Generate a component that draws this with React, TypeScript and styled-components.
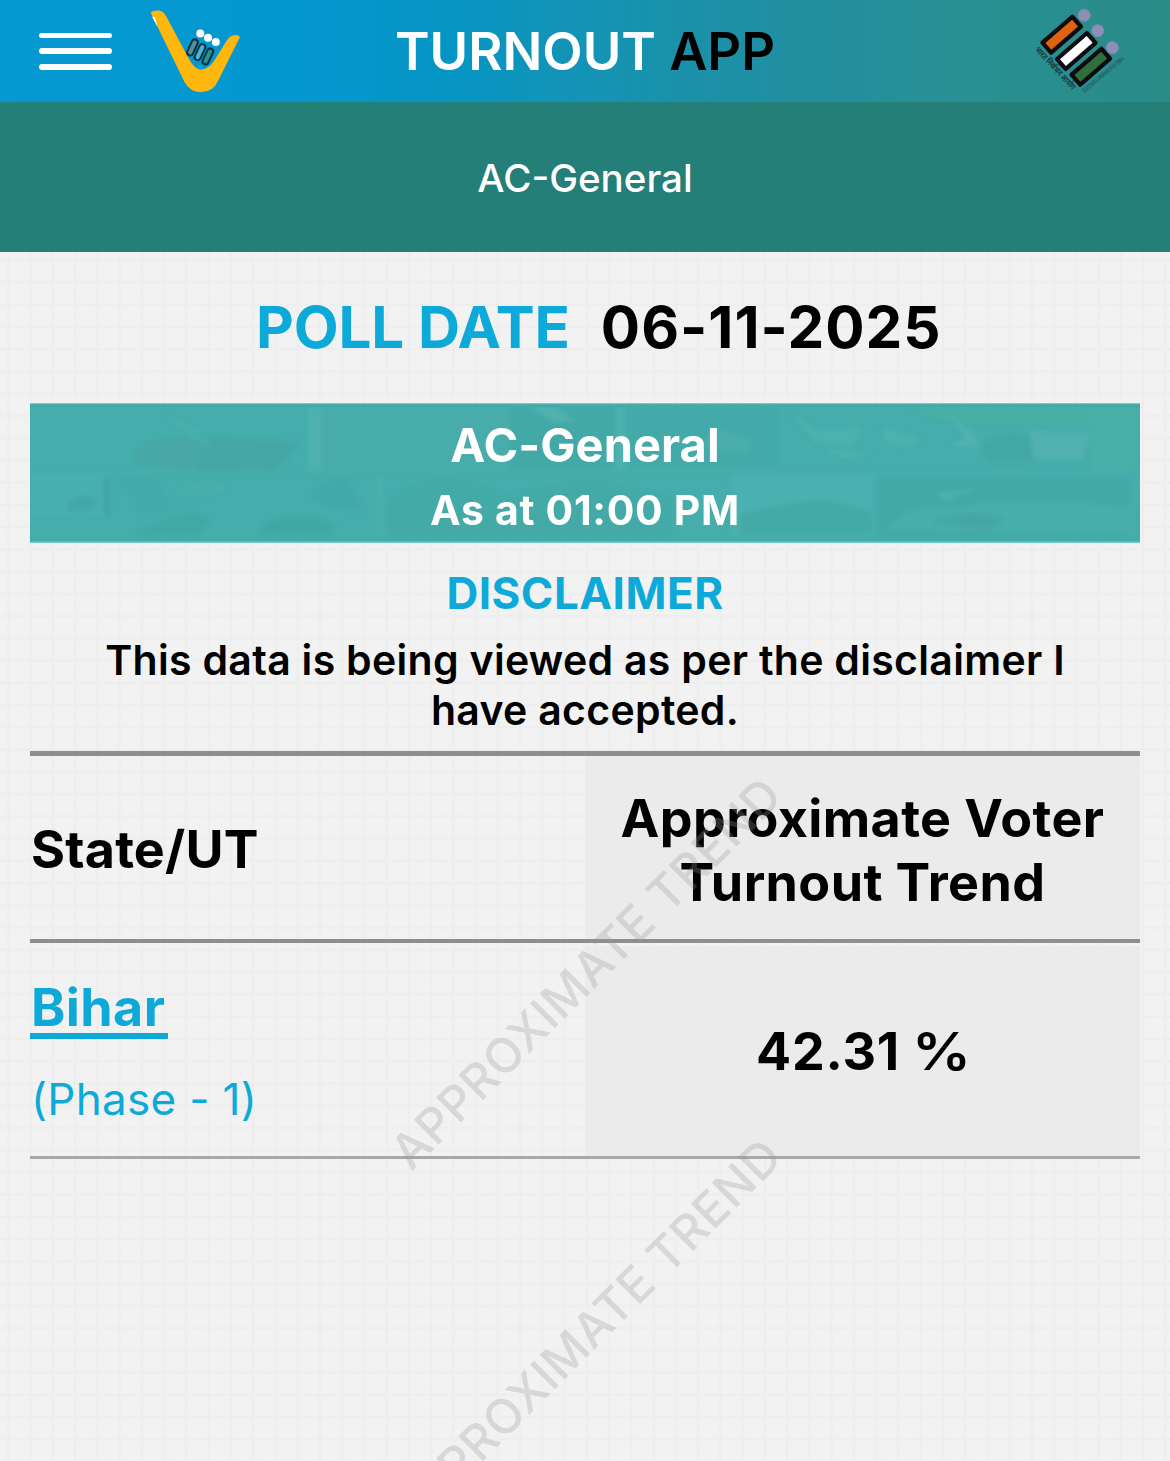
import React from "react";
import styled, { createGlobalStyle } from "styled-components";

const Global = createGlobalStyle`
  * { box-sizing: border-box; }
  html, body { margin: 0; padding: 0; }
  body {
    font-family: Inter, "Liberation Sans", sans-serif;
    color: #000;
    background: #f2f2f2;
  }
`;

const Screen = styled.div`
  position: relative;
  width: 1170px;
  height: 1461px;
  overflow: hidden;
  display: flex;
  flex-direction: column;
  background-color: #f2f2f2;
  background-image: linear-gradient(90deg, transparent 0, #eeeeee 1.5px, #eeeeee 2.5px, transparent 4px),
    linear-gradient(180deg, transparent 0, #eeeeee 1.5px, #eeeeee 2.5px, transparent 4px);
  background-size: 22.25px 22.25px;
  background-position: 6.5px 13.5px;
`;

const TopBar = styled.header`
  flex: none;
  height: 102px;
  display: grid;
  grid-template-columns: 1fr auto 1fr;
  align-items: center;
  background: linear-gradient(
    90deg,
    #0598d1 0%,
    #0598d0 25%,
    #0595c4 38%,
    #1194b9 47%,
    #1892ad 56%,
    #228fa0 68%,
    #289094 82%,
    #2a8b87 100%
  );
`;

const BarSide = styled.div<{ $end?: boolean }>`
  display: flex;
  height: 102px;
  align-items: center;
  justify-content: ${(p) => (p.$end ? "flex-end" : "flex-start")};
  padding: ${(p) => (p.$end ? "0 40px 0 0" : "0 0 0 39px")};
`;

const MenuButton = styled.button`
  width: 73px;
  height: 37px;
  margin: 0 36px 0 0;
  padding: 0;
  border: 0;
  background: none;
  display: flex;
  flex-direction: column;
  justify-content: space-between;
`;

const MenuStroke = styled.span`
  display: block;
  height: 5.6px;
  border-radius: 3px;
  background: #fff;
`;

const AppTitle = styled.h1`
  margin: 0;
  font-size: 52.5px;
  line-height: 102px;
  font-weight: 600;
  color: #fff;
  white-space: pre;
`;

const TitleDark = styled.span`
  color: #000;
`;

const SubBar = styled.div`
  flex: none;
  height: 150px;
  background: #247f78;
  color: #fff;
  font-size: 38.5px;
  font-weight: 500;
  line-height: 153px;
  text-align: center;
`;

const PollDate = styled.div`
  flex: none;
  display: flex;
  height: 151px;
  padding-left: 256px;
  gap: 31px;
  font-size: 58.3px;
  font-weight: 700;
  line-height: 150px;
  white-space: nowrap;
`;

const PollLabel = styled.span`
  color: #0daad9;
  letter-spacing: -0.1px;
`;

const PollValue = styled.span`
  letter-spacing: 1px;
`;

const Banner = styled.section`
  position: relative;
  flex: none;
  height: 140px;
  margin: 0 30px;
  padding-top: 9px;
  background: #45adab;
  color: #fff;
  text-align: center;
`;

const BannerArt = styled.svg`
  position: absolute;
  inset: 0;
  width: 100%;
  height: 100%;
`;

const BannerLine = styled.div<{ $size: number; $track: number }>`
  position: relative;
  height: 65px;
  line-height: 66px;
  font-size: ${(p) => p.$size}px;
  font-weight: 700;
  letter-spacing: ${(p) => p.$track}px;
`;

const Disclaimer = styled.section`
  flex: none;
  height: 208px;
  padding: 20px 90px 0;
  text-align: center;
`;

const DisclaimerTitle = styled.h2`
  margin: 0;
  height: 72px;
  line-height: 61px;
  font-size: 44px;
  font-weight: 700;
  letter-spacing: 0.5px;
  color: #0daad9;
`;

const DisclaimerText = styled.p`
  margin: 0;
  font-size: 41px;
  font-weight: 600;
  line-height: 50px;
  letter-spacing: 0.3px;
`;

const Table = styled.div`
  flex: none;
  margin: 0 30px;
`;

const HeadRow = styled.div`
  display: grid;
  grid-template-columns: 555px 555px;
  height: 192px;
  border-top: 5px solid #8e8e92;
  border-bottom: 4px solid #8e8e92;
`;

const BodyRow = styled.div`
  display: grid;
  grid-template-columns: 555px 555px;
  height: 216px;
  padding-top: 3px;
  border-bottom: 3px solid #a8a8a8;
`;

const StateHead = styled.div`
  display: flex;
  align-items: center;
  padding: 5px 0 0 1px;
  font-size: 52px;
  font-weight: 700;
  line-height: 64px;
  letter-spacing: 0.2px;
`;

const TrendHead = styled.div`
  padding-top: 31px;
  background: #ebebeb;
  text-align: center;
  font-size: 52px;
  font-weight: 700;
  line-height: 64px;
  letter-spacing: 0.4px;
`;

const StateCell = styled.div`
  display: flex;
  flex-direction: column;
  align-items: flex-start;
  padding-top: 31px;
  color: #0daad9;
`;

const StateLink = styled.a`
  height: 62px;
  border-bottom: 6px solid #0daad9;
  font-size: 52px;
  font-weight: 700;
  line-height: 62px;
  letter-spacing: 0.4px;
  padding: 0 3px 0 1px;
`;

const Phase = styled.div`
  margin-top: 30px;
  padding-left: 1px;
  font-size: 44px;
  line-height: 60px;
  letter-spacing: 0.3px;
`;

const TrendCell = styled.div`
  display: flex;
  align-items: center;
  justify-content: center;
  gap: 12px;
  padding: 2px 0 0 1px;
  background: #ebebeb;
  font-size: 52px;
  font-weight: 700;
  line-height: 64px;
  letter-spacing: 0.8px;
`;

const Percent = styled.span`
  margin-right: 5px;
  font-weight: 600;
  transform: scaleX(1.13);
  transform-origin: left center;
`;

const Watermark = styled.div<{ $y: number }>`
  position: absolute;
  left: 585.5px;
  top: ${(p) => p.$y}px;
  transform: translate(-50%, -50%) rotate(-45deg);
  font-size: 48px;
  font-weight: 500;
  line-height: 60px;
  letter-spacing: 0.65px;
  white-space: nowrap;
  color: rgba(150, 150, 150, 0.3);
  pointer-events: none;
`;

const Drawing = styled.svg`
  display: block;
  flex: none;
  overflow: visible;
`;

function VoterLogo() {
  const slips = [
    { x: 63.3, y: 46, fill: "#5c8f9c" },
    { x: 70.8, y: 50.7, fill: "#49b5d8" },
    { x: 78.7, y: 55, fill: "#2b8f93" },
  ];
  return (
    <Drawing width="94" height="92" viewBox="0 0 94 92" aria-label="Voter Turnout">
      <path
        d="M2.6 7.5C4 6 9 5.200 12 5.700Q15.500 6.500 18 11L40.500 53Q46 64 52.500 64.500Q60 64.500 66 56L78.500 36Q81.500 30.800 86 30.200Q90 29.700 92 32L70 76Q65 87.200 53 87.200Q42 87 36.500 77Z"
        fill="#ffb70d"
      />
      <path d="M4 11.500L9.500 22L7 12.500Z" fill="#fff" />
      {slips.map((s, i) => (
        <g key={i} transform={`translate(${s.x - 18.6},${s.y - 4}) rotate(25)`}>
          <rect x="-3" y="-8" width="6" height="17" rx="3" fill={s.fill} stroke="#0b3142" strokeWidth="2" />
        </g>
      ))}
      <circle cx="52.300" cy="28.500" r="4" fill="#fff" />
      <circle cx="60" cy="32.700" r="4" fill="#fff" />
      <circle cx="67.800" cy="37" r="4" fill="#fff" />
    </Drawing>
  );
}

function CommissionEmblem() {
  const bars = [
    { x: 31.7, y: 34.7, hx: 54.3, hy: 15.3, fill: "#e0620f" },
    { x: 46.3, y: 51, hx: 67.7, hy: 30.7, fill: "#ffffff" },
    { x: 60.8, y: 66.7, hx: 82.3, hy: 47.7, fill: "#2f6f3c" },
  ];
  return (
    <Drawing width="100" height="102" viewBox="0 0 100 102" aria-label="Election Commission">
      {bars.map((b) => (
        <g key={b.fill}>
          <circle cx={b.hx} cy={b.hy} r="6.200" fill="#8c8fb6" stroke="#7486a6" strokeWidth="0.800" />
          <rect
            x="-19.800"
            y="-6.600"
            width="39.600"
            height="13.200"
            fill={b.fill}
            stroke="#0c0b10"
            strokeWidth="4.200"
            strokeLinejoin="round"
            transform={`translate(${b.x},${b.y}) rotate(-41)`}
          />
        </g>
      ))}
      <text
        transform="translate(4.500,50) rotate(47)"
        fontFamily='"Noto Sans", sans-serif'
        fontSize="8.500"
        fontWeight="600"
        textLength="55"
        lengthAdjust="spacingAndGlyphs"
        fill="#12303a"
      >
        भारत निर्वाचन आयोग
      </text>
      <text
        transform="translate(54.500,93) rotate(-40)"
        fontFamily='"Liberation Serif", serif'
        fontSize="6.500"
        fontWeight="700"
        textLength="52"
        lengthAdjust="spacingAndGlyphs"
        fill="#1f4c55"
      >
        ELECTION COMMISSION OF INDIA
      </text>
    </Drawing>
  );
}

function BannerTexture() {
  return (
    <BannerArt viewBox="0 0 1110 140" preserveAspectRatio="none" aria-hidden="true">
      <defs>
        <filter id="soften" x="-5%" y="-5%" width="110%" height="110%">
          <feGaussianBlur stdDeviation="2" />
        </filter>
      </defs>
      <g filter="url(#soften)" opacity="0.85">
        <path d="M105 48Q130 32 175 35L182 52L170 67L108 62Z" fill="#4aa5a2" opacity="0.700" />
        <path d="M182 34L270 40L245 67L165 68Z" fill="#43a5a3" opacity="0.800" />
        <rect x="279" y="4" width="12" height="64" fill="#56b5b2" opacity="0.700" />
        <rect x="291" y="4" width="190" height="64" fill="#4dacaa" opacity="0.700" />
        <path d="M130 12Q170 18 180 48L150 25Z" fill="#4fb3ad" opacity="0.600" />
        <rect x="480" y="5" width="106" height="60" fill="#43a7a4" opacity="0.700" />
        <path d="M500 4L525 4L545 18L525 20Z" fill="#56b5b0" opacity="0.800" />
        <rect x="586" y="4" width="8" height="62" fill="#59b6b2" opacity="0.700" />
        <rect x="596" y="5" width="150" height="62" fill="#43aaa7" opacity="0.700" />
        <path d="M690 27L722 38L718 50L665 43Z" fill="#54b3ae" opacity="0.600" />
        <path d="M760 8L785 28L832 25L822 42L785 40Z" fill="#52b3af" opacity="0.900" />
        <path d="M795 46L845 50L810 55Z" fill="#55b4b1" opacity="0.800" />
        <path d="M852 24L890 36L882 44L857 42Z" fill="#52b3af" opacity="0.900" />
        <path d="M915 6L945 32L950 45L921 43L935 34Z" fill="#54b5b1" opacity="0.900" />
        <path d="M950 42Q975 25 1002 36V58H958Z" fill="#43a6a3" opacity="0.900" />
        <path d="M1000 28L1060 30L1052 56H1003Z" fill="#55b4b1" opacity="0.900" />
        <path d="M880 4H1109V20L1000 24L900 16Z" fill="#50b29f" opacity="0.500" />
        <rect x="1060" y="6" width="48" height="62" fill="#4bb0a7" opacity="0.700" />
        <rect x="2" y="72" width="74" height="42" fill="#4bb2b2" opacity="0.700" />
        <path d="M40 98Q56 86 68 98L62 108H36Z" fill="#41a5a4" opacity="0.800" />
        <rect x="74" y="74" width="5" height="38" fill="#3a9d9d" opacity="0.700" />
        <path d="M88 76L122 72L138 106L112 108Z" fill="#42aaa9" opacity="0.800" />
        <path d="M145 90Q170 68 198 84L180 94L155 92Z" fill="#4db1ab" opacity="0.600" />
        <path d="M130 118Q160 106 180 116L168 132H104Z" fill="#3fa7a2" opacity="0.800" />
        <path d="M235 122Q265 104 304 122L300 132H230Z" fill="#3fa7a2" opacity="0.900" />
        <path d="M280 92L312 72L334 107L300 104Z" fill="#42a7a7" opacity="0.800" />
        <rect x="345" y="74" width="9" height="60" fill="#53b2ad" opacity="0.700" />
        <path d="M355 96L410 74L480 92L560 78L640 94V134H355Z" fill="#45a7a4" opacity="0.550" />
        <rect x="700" y="72" width="144" height="62" fill="#50b2b1" opacity="0.800" />
        <path d="M710 112Q765 96 800 98L842 108V132H710Z" fill="#43a9a4" opacity="0.850" />
        <rect x="850" y="74" width="248" height="60" fill="#43a6a4" opacity="0.800" />
        <path d="M905 90L948 85L915 98Z" fill="#52b2ae" opacity="0.900" />
        <path d="M855 128Q875 98 920 104Q990 92 1105 104V132Z" fill="#4aafab" opacity="0.800" />
        <path d="M900 120Q930 104 975 116L960 126Z" fill="#43a5a2" opacity="0.800" />
        <rect x="2" y="68" width="1106" height="3" fill="#4bb2ae" opacity="0.500" />
      </g>
      <rect width="1110" height="1.500" fill="#7cc6c5" />
      <rect y="1.500" width="1110" height="2" fill="#3eaaa8" />
      <rect y="136.500" width="1110" height="2" fill="#3eaeaa" />
      <rect y="138.500" width="1110" height="1.500" fill="#76c8c5" />
    </BannerArt>
  );
}

export default function App() {
  return (
    <>
      <Global />
      <Screen>
        <TopBar>
          <BarSide>
            <MenuButton aria-label="Menu">
              <MenuStroke />
              <MenuStroke />
              <MenuStroke />
            </MenuButton>
            <VoterLogo />
          </BarSide>
          <AppTitle>
            TURNOUT <TitleDark>APP</TitleDark>
          </AppTitle>
          <BarSide $end>
            <CommissionEmblem />
          </BarSide>
        </TopBar>
        <SubBar>AC-General</SubBar>
        <PollDate>
          <PollLabel>POLL DATE</PollLabel>
          <PollValue>06-11-2025</PollValue>
        </PollDate>
        <Banner>
          <BannerTexture />
          <BannerLine $size={47} $track={0.05}>AC-General</BannerLine>
          <BannerLine $size={41} $track={0.7}>As at 01:00 PM</BannerLine>
        </Banner>
        <Disclaimer>
          <DisclaimerTitle>DISCLAIMER</DisclaimerTitle>
          <DisclaimerText>
            This data is being viewed as per the disclaimer I<br />
            have accepted.
          </DisclaimerText>
        </Disclaimer>
        <Table>
          <HeadRow>
            <StateHead>State/UT</StateHead>
            <TrendHead>
              Approximate Voter
              <br />
              Turnout Trend
            </TrendHead>
          </HeadRow>
          <BodyRow>
            <StateCell>
              <StateLink>Bihar</StateLink>
              <Phase>(Phase - 1)</Phase>
            </StateCell>
            <TrendCell>
              <span>42.31</span>
              <Percent>%</Percent>
            </TrendCell>
          </BodyRow>
        </Table>
        <Watermark $y={973}>APPROXIMATE TREND</Watermark>
        <Watermark $y={1334}>APPROXIMATE TREND</Watermark>
      </Screen>
    </>
  );
}
